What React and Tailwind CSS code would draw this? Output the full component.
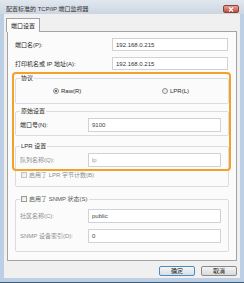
const inputBase =
  "flex items-center border border-[#cfd3d8] bg-white px-[3px] text-[6px] leading-[8px]";

function GroupBox({ legend, className, children }) {
  return (
    <div className={`relative mx-[7px] border border-[#dadcdf] rounded-[2px] ${className}`}>
      <div className="absolute left-[4px] top-[-5px] flex items-center gap-[2px] bg-[#fbfbfb] px-[1px]">
        {legend}
      </div>
      {children}
    </div>
  );
}

function Field({ label, value, disabled, muted }) {
  return (
    <div className="flex h-[14px] items-center justify-between pl-[4px] pr-[7px]">
      <span className={muted ? "text-[#8d8d8d]" : "text-[#2a2a2a]"}>{label}</span>
      <div className={`${inputBase} h-[14px] w-[133px] ${disabled ? "text-[#9a9a9a]" : "text-[#444]"}`}>
        {value}
      </div>
    </div>
  );
}

function Checkbox({ muted }) {
  return (
    <span
      className={`inline-block h-[6px] w-[6px] border bg-gradient-to-br from-[#e6e6e6] to-[#fafafa] ${
        muted ? "border-[#c4c4c4]" : "border-[#9a9a9a]"
      }`}
    />
  );
}

function Radio({ checked }) {
  return (
    <span className="flex h-[6px] w-[6px] items-center justify-center rounded-full border border-[#8f8f8f] bg-gradient-to-br from-[#e2e2e2] to-[#fbfbfb]">
      {checked ? <span className="h-[2px] w-[2px] rounded-full bg-[#2c4c6e]" /> : null}
    </span>
  );
}

export default function App() {
  return (
    <div className="flex h-[283px] w-[244px] flex-col border-b border-[#3e5c76] bg-[#bccfe4] font-['Liberation_Sans','Noto_Sans_CJK_SC',sans-serif] text-[6px] leading-[8px] text-[#2a2a2a]">
      {/* title bar */}
      <div className="flex h-[14px] shrink-0 items-center justify-between bg-gradient-to-b from-[#e1e7ee] to-[#ccd6e1] pl-[6px] pr-[5px] pt-[4px]">
        <span className="text-[#333]">配置标准的 TCP/IP 端口监视器</span>
        <div className="flex h-[8px] w-[16px] items-center justify-center rounded-[2px] border border-[#8d4038] bg-gradient-to-b from-[#e5a496] to-[#c24a3b]">
          <svg width="6" height="5" viewBox="0 0 6 5">
            <path d="M1 0.5 L5 4.5 M5 0.5 L1 4.5" stroke="#fff" strokeWidth="1.2" />
          </svg>
        </div>
      </div>

      <div className="flex flex-1 flex-col px-[4px] pb-[4px]">
        <div className="flex flex-1 flex-col bg-[#f0f0f0]">
          {/* tab */}
          <div className="ml-[2px] mt-[4px] flex">
            <div className="relative z-10 -mb-px flex h-[14px] w-[34px] items-center justify-center border border-b-0 border-[#a3a3a3] bg-[#fbfbfb] text-[#222]">
              端口设置
            </div>
          </div>

          {/* tab panel */}
          <div className="relative mx-[3px] flex h-[230px] flex-col border border-[#a3a3a3] bg-[#fbfbfb]">
            <div className="mt-[6px] flex h-[13px] items-center justify-between pl-[7px] pr-[8px]">
              <span>端口名(P):</span>
              <div className={`${inputBase} h-[13px] w-[116px] text-[#333]`}>192.168.0.215</div>
            </div>
            <div className="mt-[6px] flex h-[13px] items-center justify-between pl-[7px] pr-[8px]">
              <span>打印机名或 IP 地址(A):</span>
              <div className={`${inputBase} h-[13px] w-[116px] text-[#333]`}>192.168.0.215</div>
            </div>

            <GroupBox legend={<span>协议</span>} className="mt-[8px] h-[26px]">
              <div className="flex h-full items-center pl-[37px]">
                <div className="flex w-[109px] items-center gap-[2px]">
                  <Radio checked />
                  <span>Raw(R)</span>
                </div>
                <div className="flex items-center gap-[2px]">
                  <Radio />
                  <span>LPR(L)</span>
                </div>
              </div>
            </GroupBox>

            <GroupBox legend={<span>原始设置</span>} className="mt-[7px] h-[25px]">
              <div className="pt-[6px]">
                <Field label="端口号(N):" value="9100" />
              </div>
            </GroupBox>

            <GroupBox legend={<span>LPR 设置</span>} className="mt-[10px] h-[41px]">
              <div className="pt-[6px]">
                <Field label="队列名称(Q):" value="lp" muted disabled />
              </div>
              <div className="mt-[4px] flex items-center gap-[2px] pl-[5px] text-[#8d8d8d]">
                <Checkbox muted />
                <span>启用了 LPR 字节计数(B)</span>
              </div>
            </GroupBox>

            <GroupBox
              legend={
                <>
                  <Checkbox />
                  <span className="text-[#555]">启用了 SNMP 状态(S)</span>
                </>
              }
              className="mt-[12px] h-[53px]"
            >
              <div className="flex flex-col gap-[6px] pt-[9px]">
                <Field label="社区名称(C):" value="public" muted />
                <Field label="SNMP 设备索引(D):" value="0" muted />
              </div>
            </GroupBox>

            {/* highlight */}
            <div className="pointer-events-none absolute left-[4px] top-[40px] h-[99px] w-[219px] rounded-[4px] border-2 border-[#f4a12a]" />
          </div>

          {/* buttons */}
          <div className="mr-[3px] mt-[5px] flex justify-end gap-[6px]">
            <button className="flex h-[10px] w-[36px] items-center justify-center rounded-[2px] border border-[#4a8cc4] bg-gradient-to-b from-[#f4f6f8] to-[#d9dde2] text-[6px] leading-[8px] text-[#222]">
              确定
            </button>
            <button className="flex h-[10px] w-[36px] items-center justify-center rounded-[2px] border border-[#8a8a8a] bg-gradient-to-b from-[#f4f4f4] to-[#dadada] text-[6px] leading-[8px] text-[#222]">
              取消
            </button>
          </div>
        </div>
      </div>
    </div>
  );
}
